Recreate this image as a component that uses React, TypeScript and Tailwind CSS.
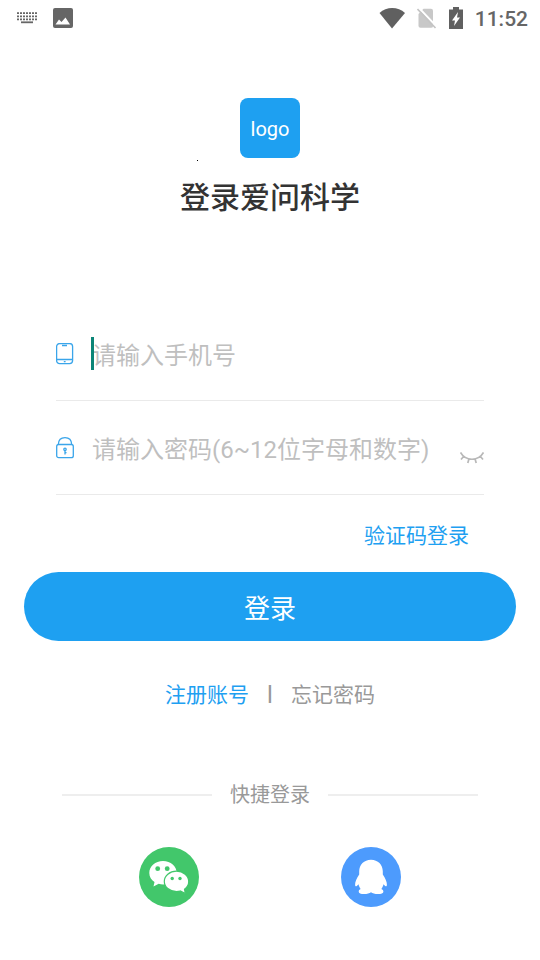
import { useState } from 'react';

const KeyboardIcon = () => (
  <svg width="20" height="12" viewBox="0 0 20 12" stroke="#666" fill="none">
    <path d="M0 1.2h20M0 4.3h20M0 7.4h20" strokeWidth="1.7" strokeDasharray="2 1" />
    <path d="M4 10.3h12" strokeWidth="1.8" />
  </svg>
);

const PhotoIcon = () => (
  <svg width="20" height="20" viewBox="0 0 20 20">
    <rect width="20" height="20" rx="2" fill="#666" />
    <path d="M2.500 16.500l3.500-5 2.500 2.500 4-4.500 4.500 7z" fill="#fff" />
  </svg>
);

const WifiIcon = () => (
  <svg width="26" height="21" viewBox="0 0 26 21">
    <path d="M13 20.500L.5 5C4 1.500 8.500 0 13.200 0s9.300 1.500 12.800 5z" fill="#606060" />
  </svg>
);

const NoSimIcon = () => (
  <svg width="20" height="21" viewBox="0 0 20 21">
    <path d="M6.500 .8H14q2 0 2 2v15.500q0 1.500-2 1.500H3.500Q1.500 19.800 1.500 18V6z" fill="#c8c8c8" />
    <path d="M2 0L20 19" stroke="#fff" strokeWidth="2" />
    <path d="M.5 1l18 19" stroke="#c4c4c4" strokeWidth="1.600" />
  </svg>
);

const BatteryIcon = () => (
  <svg width="14" height="22" viewBox="0 0 14 22">
    <path d="M4 0h6v2.500h4V22H0V2.500h4z" fill="#606060" />
    <path d="M9 5L3 13.500h3L5 19l6-8.500H8z" fill="#fff" />
  </svg>
);

const PhoneIcon = () => (
  <svg width="18" height="22" viewBox="0 0 18 22" fill="none" stroke="#3aa5ea" strokeWidth="1.3">
    <rect x=".6" y=".6" width="16" height="20" rx="3" />
    <path d="M6 2.500h5M.6 16.500h16M7.800 18.600h1.800" />
  </svg>
);

const LockIcon = () => (
  <svg width="18" height="22" viewBox="0 0 18 22" fill="none" stroke="#3aa5ea" strokeWidth="1.3">
    <rect x=".7" y="7.500" width="16.600" height="13.200" rx="2" />
    <path d="M2.300 7.500C2.500 3.200 5 .7 9 .7s6.500 2.500 6.700 6.800" />
    <circle cx="9" cy="12.300" r="1.200" />
    <path d="M9 13.500v4M9 15.700h1.500" />
  </svg>
);

const EyeClosedIcon = () => (
  <svg width="24" height="14" viewBox="0 0 24 14" fill="none" stroke="#b8b8b8" strokeWidth="1.700">
    <path d="M.5 1.500C5.500 10.500 18.500 10.500 23.500 1.500M4 5L1 8.500M9 7.800L7.800 12M15 7.800l1.200 4.200M20 5l3 3.500" />
  </svg>
);

const WechatIcon = () => (
  <svg width="60" height="60" viewBox="0 0 60 60">
    <circle cx="30" cy="30" r="30" fill="#42c76b" />
    <path
      d="M24 14c-7.700 0-13.700 5.300-13.700 11.900 0 3.800 2 7 5.200 9.200L14.500 39.500l5.200-2.700c1.400.4 2.800.6 4.300.6 7.700 0 13.700-5.100 13.700-11.500S31.700 14 24 14z"
      fill="#fff"
    />
    <circle cx="18.700" cy="21.700" r="2.400" fill="#42c76b" />
    <circle cx="28.200" cy="21.700" r="2.400" fill="#42c76b" />
    <path
      d="M37.500 24.200c6.900 0 12.200 4.700 12.200 10.300 0 3.100-1.600 5.900-4.200 7.800l.8 4.200-5-2.500c-1.200.3-2.400.5-3.800.5-6.900 0-12.200-4.500-12.200-10s5.300-10.300 12.200-10.300z"
      fill="#fff"
      stroke="#42c76b"
      strokeWidth="1.200"
    />
    <circle cx="33.200" cy="31.500" r="1.700" fill="#42c76b" />
    <circle cx="41" cy="31.500" r="1.700" fill="#42c76b" />
  </svg>
);

const QQIcon = () => (
  <svg width="60" height="60" viewBox="0 0 60 60">
    <circle cx="30" cy="30" r="30" fill="#4d9bfd" />
    <path
      d="M30 12.800c-7 0-11.800 5-11.800 11.500v3.200c-2.500 3.500-4.200 7.500-4.100 10.200.1 1.700.8 2.100 1.700 1.200l1.700-1.600c.5 2 1.100 3.400 2.200 4.600-1.300.6-2 1.400-2 2.500 0 2 2 2.700 5.500 2.700 3 0 5.200-.6 6.800-1.800 1.600 1.200 3.800 1.800 6.800 1.800 3.500 0 5.600-.7 5.600-2.700 0-1.100-.8-1.900-2.100-2.500 1.100-1.200 1.700-2.600 2.200-4.600l1.700 1.600c.9.900 1.600.5 1.700-1.200.1-2.700-1.600-6.700-4.100-10.200v-3.200c0-6.500-4.800-11.500-11.800-11.500z"
      fill="#fff"
    />
  </svg>
);

const thirdParty = [
  { id: 'wechat', label: '微信', icon: <WechatIcon /> },
  { id: 'qq', label: 'QQ', icon: <QQIcon /> },
];

const App = () => {
  const [phone, setPhone] = useState('');
  const [password, setPassword] = useState('');
  const [showPassword, setShowPassword] = useState(false);

  return (
    <div className="min-h-screen bg-white font-['Roboto','Noto_Sans_CJK_SC',sans-serif] text-[#333]">
      <header className="flex h-9 items-center justify-between pl-[17px] pr-3">
        <div className="flex items-center gap-4">
          <KeyboardIcon />
          <PhotoIcon />
        </div>
        <div className="flex items-center">
          <div className="flex items-center gap-3 pr-3">
            <WifiIcon />
            <NoSimIcon />
            <BatteryIcon />
          </div>
          <span className="pt-0.5 text-[21px] font-medium leading-6 text-[#666]">11:52</span>
        </div>
      </header>

      <main>
        <div className="flex flex-col items-center pt-[62px]">
          <div className="relative flex size-[60px] items-center justify-center rounded-lg bg-[#1ea0f1] pt-0.5 text-xl text-white">
            logo
            <span className="absolute -left-[43px] top-[62px] size-px bg-black" />
          </div>
          <h1 className="mt-[18px] text-[30px] font-medium leading-[44px]">登录爱问科学</h1>
        </div>

        <form className="mt-[87px]" onSubmit={(e) => e.preventDefault()}>
          <div className="px-14">
            <div className="flex h-[94px] items-center gap-[18px] border-b border-[#eaeaea]">
              <label htmlFor="phone" aria-label="手机号">
                <PhoneIcon />
              </label>
              <div className="relative flex-1">
                <input
                  id="phone"
                  type="tel"
                  value={phone}
                  onChange={(e) => setPhone(e.target.value)}
                  placeholder="请输入手机号"
                  className="block h-9 w-full pt-1 text-2xl outline-none placeholder:text-[#bfbfbf]"
                />
                {!phone && <span className="absolute -left-px top-px h-[33px] w-[3px] bg-[#0b8577]" />}
              </div>
            </div>
            <div className="flex h-[94px] items-center gap-[18px] border-b border-[#eaeaea]">
              <label htmlFor="password" aria-label="密码">
                <LockIcon />
              </label>
              <input
                id="password"
                type={showPassword ? 'text' : 'password'}
                value={password}
                onChange={(e) => setPassword(e.target.value)}
                placeholder="请输入密码(6~12位字母和数字)"
                className="block h-9 min-w-0 flex-1 pt-1 text-2xl outline-none placeholder:text-[#bfbfbf]"
              />
              <button
                type="button"
                aria-label="显示密码"
                className="pt-5"
                onClick={() => setShowPassword(!showPassword)}
              >
                <EyeClosedIcon />
              </button>
            </div>
          </div>

          <div className="flex justify-end pr-[71px] pt-[25px]">
            <a href="#code" className="text-[21px] leading-8 text-[#1ea0f1]">验证码登录</a>
          </div>

          <div className="px-6 pt-5">
            <button type="submit" className="h-[69px] w-full rounded-full bg-[#1ea0f1] pt-1.5 text-[26px] text-white">
              登录
            </button>
          </div>
        </form>

        <div className="mt-[38px] flex items-center justify-center gap-[18px] text-[21px] leading-8 text-[#999]">
          <a href="#register" className="text-[#1ea0f1]">注册账号</a>
          <span className="text-2xl leading-8">l</span>
          <a href="#forgot">忘记密码</a>
        </div>

        <div className="mt-[68px] flex items-center gap-[18px] px-[62px]">
          <div className="h-0.5 flex-1 bg-[#eee]" />
          <span className="text-xl leading-8 text-[#999]">快捷登录</span>
          <div className="h-0.5 flex-1 bg-[#eee]" />
        </div>

        <div className="mt-9 grid grid-cols-2 px-[68px] pb-8">
          {thirdParty.map((item) => (
            <button key={item.id} type="button" aria-label={item.label} className="justify-self-center rounded-full">
              {item.icon}
            </button>
          ))}
        </div>
      </main>
    </div>
  );
};

export default App;
